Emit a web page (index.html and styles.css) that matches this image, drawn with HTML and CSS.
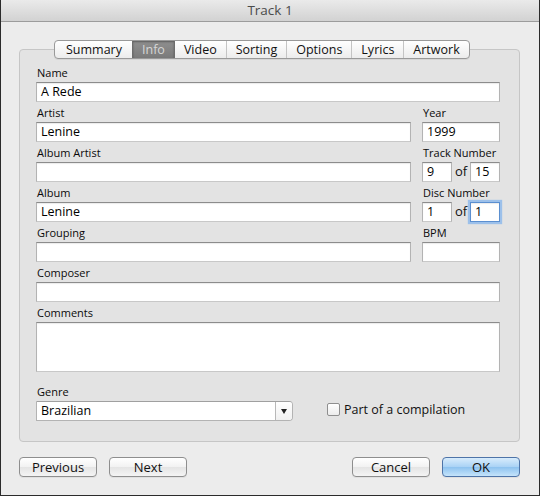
FILE: index.html
```html
<!DOCTYPE html>
<html>
<head>
<meta charset="utf-8">
<title>Track 1</title>
<link rel="stylesheet" href="styles.css">
</head>
<body>
<div class="window">
  <div class="titlebar">Track 1</div>
  <div class="content">
    <div class="tabs">
      <div class="tab">Summary</div>
      <div class="tab selected">Info</div>
      <div class="tab">Video</div>
      <div class="tab">Sorting</div>
      <div class="tab">Options</div>
      <div class="tab">Lyrics</div>
      <div class="tab">Artwork</div>
    </div>
    <div class="groupbox">
      <div class="grid">
        <div class="cell span2">
          <div class="label">Name</div>
          <div class="field">A Rede</div>
        </div>
        <div class="cell">
          <div class="label">Artist</div>
          <div class="field">Lenine</div>
        </div>
        <div class="cell">
          <div class="label">Year</div>
          <div class="field">1999</div>
        </div>
        <div class="cell">
          <div class="label">Album Artist</div>
          <div class="field"></div>
        </div>
        <div class="cell">
          <div class="label">Track Number</div>
          <div class="pair">
            <div class="field small">9</div>
            <span class="of">of</span>
            <div class="field small">15</div>
          </div>
        </div>
        <div class="cell">
          <div class="label">Album</div>
          <div class="field">Lenine</div>
        </div>
        <div class="cell">
          <div class="label">Disc Number</div>
          <div class="pair">
            <div class="field small">1</div>
            <span class="of">of</span>
            <div class="field small focus">1</div>
          </div>
        </div>
        <div class="cell">
          <div class="label">Grouping</div>
          <div class="field"></div>
        </div>
        <div class="cell">
          <div class="label">BPM</div>
          <div class="field"></div>
        </div>
        <div class="cell span2">
          <div class="label">Composer</div>
          <div class="field"></div>
        </div>
        <div class="cell span2">
          <div class="label">Comments</div>
          <div class="field area"></div>
        </div>
      </div>
      <div class="genre-row">
        <div class="genre">
          <div class="label">Genre</div>
          <div class="combo">
            <div class="combo-text">Brazilian</div>
            <div class="combo-btn"><span class="arrow"></span></div>
          </div>
        </div>
        <label class="check">
          <span class="box"></span>
          <span>Part of a compilation</span>
        </label>
      </div>
    </div>
    <div class="buttons">
      <div class="btn">Previous</div>
      <div class="btn">Next</div>
      <div class="spacer"></div>
      <div class="btn">Cancel</div>
      <div class="btn default">OK</div>
    </div>
  </div>
</div>
</body>
</html>
```
FILE: styles.css
```css
* { box-sizing: border-box; }
html, body { margin: 0; padding: 0; background: #ececec; }
body { font-family: "Open Sans", "DejaVu Sans", sans-serif; color: #000; }

.window {
  width: 540px;
  height: 496px;
  border: 1px solid #2b2b2b;
  border-top: none;
  background: #ececec;
  display: flex;
  flex-direction: column;
}

.titlebar {
  height: 22px;
  background: linear-gradient(#eaeaea, #d2d2d2);
  border-bottom: 1px solid #9c9c9c;
  text-align: center;
  font-size: 13.5px;
  line-height: 21px;
  color: #4b4b4b;
}

.content {
  flex: 1;
  display: flex;
  flex-direction: column;
  padding: 18px 19px 0 18px;
}

.tabs {
  position: relative;
  z-index: 1;
  align-self: flex-start;
  margin-left: 35px;
  display: flex;
  height: 19px;
  border: 1px solid #999;
  border-radius: 4px;
  background: linear-gradient(#ffffff, #ececec);
  overflow: hidden;
  box-shadow: 0 1px 0 rgba(0,0,0,0.06);
}
.tab {
  font-size: 12.5px;
  line-height: 17px;
  padding: 0 9px;
  border-left: 1px solid #c4c4c4;
  color: #111;
}
.tab:first-child { border-left: none; padding: 0 10px 0 11px; }
.tab.selected {
  background: linear-gradient(#8f8f8f, #7a7a7a);
  color: #d6d6d6;
  border-left-color: #6d6d6d;
  box-shadow: inset 0 1px 2px rgba(0,0,0,0.35);
}
.tab.selected + .tab { border-left-color: #6d6d6d; }

.groupbox {
  margin-top: -10px;
  height: 393px;
  border: 1px solid #c6c6c6;
  border-radius: 4px;
  background: #e3e3e3;
  padding: 12px 19px 0 16px;
}

.grid {
  display: grid;
  grid-template-columns: 375px 78px;
  column-gap: 11px;
}
.span2 { grid-column: span 2; }

.label {
  font-size: 11px;
  line-height: 14px;
  padding-top: 4px;
  padding-left: 1px;
  margin-bottom: 2px;
  color: #0a0a0a;
  white-space: nowrap;
}

.field {
  height: 20px;
  background: #fff;
  border: 1px solid #b3b3b3;
  border-top-color: #8c8c8c;
  border-bottom-color: #c8c8c8;
  box-shadow: inset 0 1px 1px rgba(0,0,0,0.08);
  font-size: 12.5px;
  line-height: 18px;
  padding-left: 4px;
  color: #000;
}
.field.area { height: 50px; }

.pair {
  display: flex;
  align-items: center;
}
.field.small { width: 30px; }
.of {
  font-size: 13px;
  width: 18px;
  text-align: center;
  line-height: 16px;
  padding-bottom: 3px;
  color: #111;
}
.field.focus {
  border: 1px solid #5b8fd0;
  box-shadow: 0 0 1px 2px #9cc0ea, inset 0 1px 1px rgba(0,0,0,0.08);
}

.genre-row {
  display: flex;
  align-items: flex-end;
  margin-top: 9px;
}
.genre { width: 257px; }
.combo {
  height: 20px;
  display: flex;
  background: #fff;
  border: 1px solid #b3b3b3;
  border-top-color: #a0a0a0;
  border-radius: 0 4px 4px 0;
}
.combo-text {
  flex: 1;
  font-size: 12.5px;
  line-height: 18px;
  padding-left: 4px;
}
.combo-btn {
  width: 17px;
  border-left: 1px solid #b8b8b8;
  background: linear-gradient(#ffffff, #f0f0f0);
  border-radius: 0 3px 3px 0;
  display: flex;
  align-items: center;
  justify-content: center;
}
.arrow {
  width: 0; height: 0;
  border-left: 3.5px solid transparent;
  border-right: 3.5px solid transparent;
  border-top: 5px solid #222;
}

.check {
  display: flex;
  align-items: center;
  margin-left: 34px;
  margin-bottom: 3px;
  font-size: 12.5px;
  color: #111;
}
.box {
  width: 13px;
  height: 13px;
  border: 1px solid #8f8f8f;
  border-radius: 2px;
  background: linear-gradient(#ffffff, #ececec);
  margin-right: 4px;
}

.buttons {
  display: flex;
  margin-top: 15px;
  gap: 12px;
}
.spacer { flex: 1; }
.btn {
  width: 78px;
  height: 20px;
  border: 1px solid #8e8e8e;
  border-radius: 4px;
  background: linear-gradient(#ffffff, #f2f2f2 50%, #e4e4e4 51%, #f4f4f4);
  font-size: 13px;
  line-height: 18px;
  text-align: center;
  color: #111;
  box-shadow: 0 1px 0 rgba(0,0,0,0.05);
}
.btn.default {
  border-color: #4e74a8;
  background: linear-gradient(#d8ecfc, #a9d2f5 50%, #8dc2ef 51%, #c5e4fb);
}
```
